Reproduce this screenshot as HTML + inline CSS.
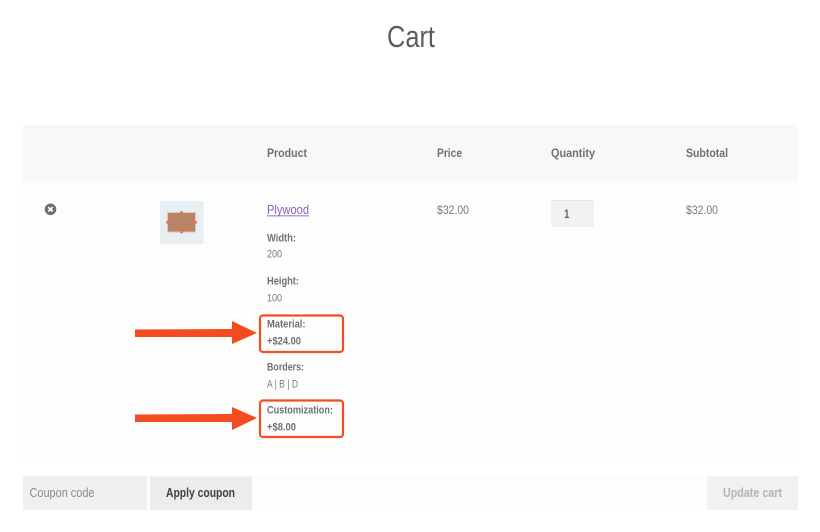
<!DOCTYPE html>
<html lang="en">
<head>
<meta charset="utf-8">
<title>Cart</title>
<style>
html,body{margin:0;padding:0;background:#fff;width:820px;height:532px;overflow:hidden}
svg{display:block;filter:blur(.35px)}
text{font-family:"Liberation Sans",Arial,sans-serif}
.h{font-size:12px;font-weight:700;fill:#6f6f6f}
.b{font-size:11px;font-weight:700;fill:#717171}
.r{font-size:11px;fill:#7a7a7a}
.p{font-size:12px;fill:#7a7a7a}
</style>
</head>
<body>
<svg width="820" height="532" viewBox="0 0 820 532" xmlns="http://www.w3.org/2000/svg">
<rect width="820" height="532" fill="#fff"/>
<text x="387" y="47" font-size="31" fill="#5c5c5c" textLength="48" lengthAdjust="spacingAndGlyphs">Cart</text>

<rect x="23" y="125" width="775" height="56" fill="#f8f8f8"/>
<rect x="23" y="181" width="775" height="283" fill="#fdfdfd"/>

<text class="h" x="267" y="157" textLength="40" lengthAdjust="spacingAndGlyphs">Product</text>
<text class="h" x="437" y="157" textLength="25" lengthAdjust="spacingAndGlyphs">Price</text>
<text class="h" x="551" y="157" textLength="44" lengthAdjust="spacingAndGlyphs">Quantity</text>
<text class="h" x="686" y="157" textLength="42" lengthAdjust="spacingAndGlyphs">Subtotal</text>

<circle cx="50.5" cy="209.3" r="5.8" fill="#6d6d78"/>
<path d="M48.3 207.1l4.4 4.4M52.7 207.1l-4.4 4.4" stroke="#fff" stroke-width="1.7" fill="none"/>

<rect x="160" y="201" width="43.5" height="43" rx="1.5" fill="#e8eff2"/>
<rect x="167.5" y="212.5" width="28" height="19.5" fill="#b88465" stroke="#dcc9b9" stroke-width="1"/>
<g fill="#f0754f">
<circle cx="181.5" cy="212.5" r="1.5"/>
<circle cx="181.5" cy="232" r="1.5"/>
<circle cx="167.5" cy="222.3" r="1.5"/>
<circle cx="195.5" cy="222.3" r="1.5"/>
</g>

<text x="267" y="214" font-size="13" fill="#8a5fc0" textLength="42" lengthAdjust="spacingAndGlyphs">Plywood</text>
<rect x="267" y="215.4" width="42" height="0.9" fill="#8a5fc0"/>

<text class="b" x="267" y="241.500" textLength="29" lengthAdjust="spacingAndGlyphs">Width:</text>
<text class="r" x="267" y="257.500" textLength="15" lengthAdjust="spacingAndGlyphs">200</text>
<text class="b" x="267" y="284.500" textLength="32" lengthAdjust="spacingAndGlyphs">Height:</text>
<text class="r" x="267" y="301.500" textLength="15" lengthAdjust="spacingAndGlyphs">100</text>
<text class="b" x="267" y="327.500" textLength="38.5" lengthAdjust="spacingAndGlyphs">Material:</text>
<text class="b" x="267" y="344.500" textLength="34" lengthAdjust="spacingAndGlyphs">+$24.00</text>
<text class="b" x="267" y="370.500" textLength="37" lengthAdjust="spacingAndGlyphs">Borders:</text>
<text class="r" x="267" y="387.500" textLength="31" lengthAdjust="spacingAndGlyphs">A | B | D</text>
<text class="b" x="267" y="413.500" textLength="66" lengthAdjust="spacingAndGlyphs">Customization:</text>
<text class="b" x="267" y="430.500" textLength="29" lengthAdjust="spacingAndGlyphs">+$8.00</text>

<text class="p" x="437" y="214" textLength="32" lengthAdjust="spacingAndGlyphs">$32.00</text>
<text class="p" x="686" y="214" textLength="32" lengthAdjust="spacingAndGlyphs">$32.00</text>

<rect x="551" y="200" width="43" height="27" fill="#f2f2f2"/>
<rect x="551" y="200" width="43" height="1" fill="#e6e6e6"/>
<text x="564" y="218" font-size="11.500" font-weight="700" fill="#666" textLength="5.5" lengthAdjust="spacingAndGlyphs">1</text>

<g fill="none" stroke="#f24e23" stroke-width="2.2">
<rect x="260" y="315.500" width="83" height="36.500" rx="3"/>
<rect x="260" y="400.500" width="83" height="36.500" rx="3"/>
</g>
<g fill="#f54b21">
<path d="M135 329.500L232 329V321L257 333L232 344V337L135 337Z"/>
<path d="M135 414.500L232 414V407L257 418L232 430V422L135 422Z"/>
</g>

<rect x="23" y="476" width="775" height="34" fill="#fdfdfd"/>
<rect x="23" y="476" width="124" height="34" fill="#f0f0f0"/>
<text x="29.500" y="497" font-size="12.500" fill="#8a8a8a" textLength="65" lengthAdjust="spacingAndGlyphs">Coupon code</text>
<rect x="150" y="476.500" width="102" height="33.500" fill="#ececec"/>
<text x="166" y="497" font-size="12.500" font-weight="700" fill="#3f3f3f" textLength="69" lengthAdjust="spacingAndGlyphs">Apply coupon</text>
<rect x="707" y="476" width="91" height="34" fill="#f1f1f1"/>
<text x="723" y="497" font-size="12.500" font-weight="700" fill="#b4b4b4" textLength="59" lengthAdjust="spacingAndGlyphs">Update cart</text>
</svg>
</body>
</html>
